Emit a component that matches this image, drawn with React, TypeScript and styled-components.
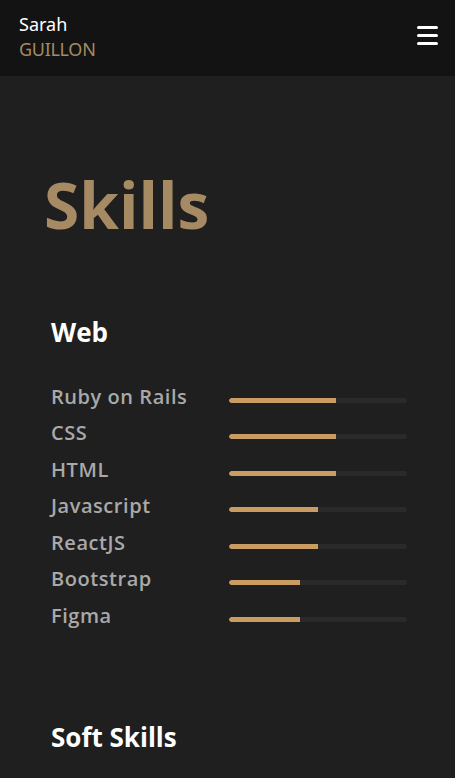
import React from "react";
import styled, { createGlobalStyle } from "styled-components";

const Global = createGlobalStyle`
  html, body { margin: 0; padding: 0; background: #1f1f1f; }
  body { font-family: "Open Sans", "Noto Sans", sans-serif; }
  * { box-sizing: border-box; }
`;

const Page = styled.div`
  width: 455px;
  min-height: 778px;
  background: #1f1f1f;
  overflow: hidden;
`;

const Header = styled.header`
  height: 76px;
  background: #131313;
  display: flex;
  align-items: flex-start;
  justify-content: space-between;
  padding: 12px 17px 0 19px;
`;

const Brand = styled.div`
  display: flex;
  flex-direction: column;
  font-family: "Noto Sans", sans-serif;
  font-size: 18px;
  line-height: 25px;
`;

const First = styled.span`
  color: #ffffff;
`;

const Last = styled.span`
  color: #a68a64;
  letter-spacing: -0.3px;
`;

const Burger = styled.button`
  margin-top: 14px;
  width: 21px;
  padding: 0;
  border: 0;
  background: none;
  display: flex;
  flex-direction: column;
  gap: 5px;
  cursor: pointer;
`;

const BurgerLine = styled.span`
  display: block;
  width: 21px;
  height: 3px;
  border-radius: 1.5px;
  background: #ffffff;
`;

const Main = styled.main`
  padding: 91px 48px 0 44px;
`;

const Title = styled.h1`
  margin: 0;
  font-family: "Open Sans", sans-serif;
  font-weight: 700;
  font-size: 64px;
  line-height: 1.2;
  color: #a68a64;
`;

const Group = styled.section<{ $top: number }>`
  margin-top: ${(p) => p.$top}px;
  padding-left: 7px;
`;

const GroupTitle = styled.h2`
  margin: 0;
  font-family: "Open Sans", sans-serif;
  font-weight: 700;
  font-size: 26px;
  line-height: 1.2;
  color: #ffffff;
`;

const List = styled.ul`
  list-style: none;
  margin: 31px 0 0;
  padding: 0;
`;

const Row = styled.li`
  display: grid;
  grid-template-columns: 178px 178px;
  align-items: center;
  height: 36.5px;
`;

const Label = styled.span`
  font-family: "Open Sans", sans-serif;
  font-weight: 600;
  font-size: 20px;
  letter-spacing: 0.55px;
  line-height: 36.5px;
  color: #a9a9a9;
`;

const Track = styled.div`
  height: 5px;
  margin-top: 6px;
  border-radius: 3px;
  background: #2a2a2a;
  overflow: hidden;
`;

const Fill = styled.div`
  height: 100%;
  background: #c99d62;
  border-radius: 3px 0 0 3px;
`;

const web: [string, number][] = [
  ["Ruby on Rails", 60],
  ["CSS", 60],
  ["HTML", 60],
  ["Javascript", 50],
  ["ReactJS", 50],
  ["Bootstrap", 40],
  ["Figma", 40],
];

export default function App() {
  return (
    <Page>
      <Global />
      <Header>
        <Brand>
          <First>Sarah</First>
          <Last>GUILLON</Last>
        </Brand>
        <Burger aria-label="menu">
          <BurgerLine />
          <BurgerLine />
          <BurgerLine />
        </Burger>
      </Header>
      <Main>
        <Title>Skills</Title>
        <Group $top={73}>
          <GroupTitle>Web</GroupTitle>
          <List>
            {web.map(([name, v]) => (
              <Row key={name}>
                <Label>{name}</Label>
                <Track>
                  <Fill style={{ width: `${v}%` }} />
                </Track>
              </Row>
            ))}
          </List>
        </Group>
        <Group $top={88}>
          <GroupTitle>Soft Skills</GroupTitle>
        </Group>
      </Main>
    </Page>
  );
}
